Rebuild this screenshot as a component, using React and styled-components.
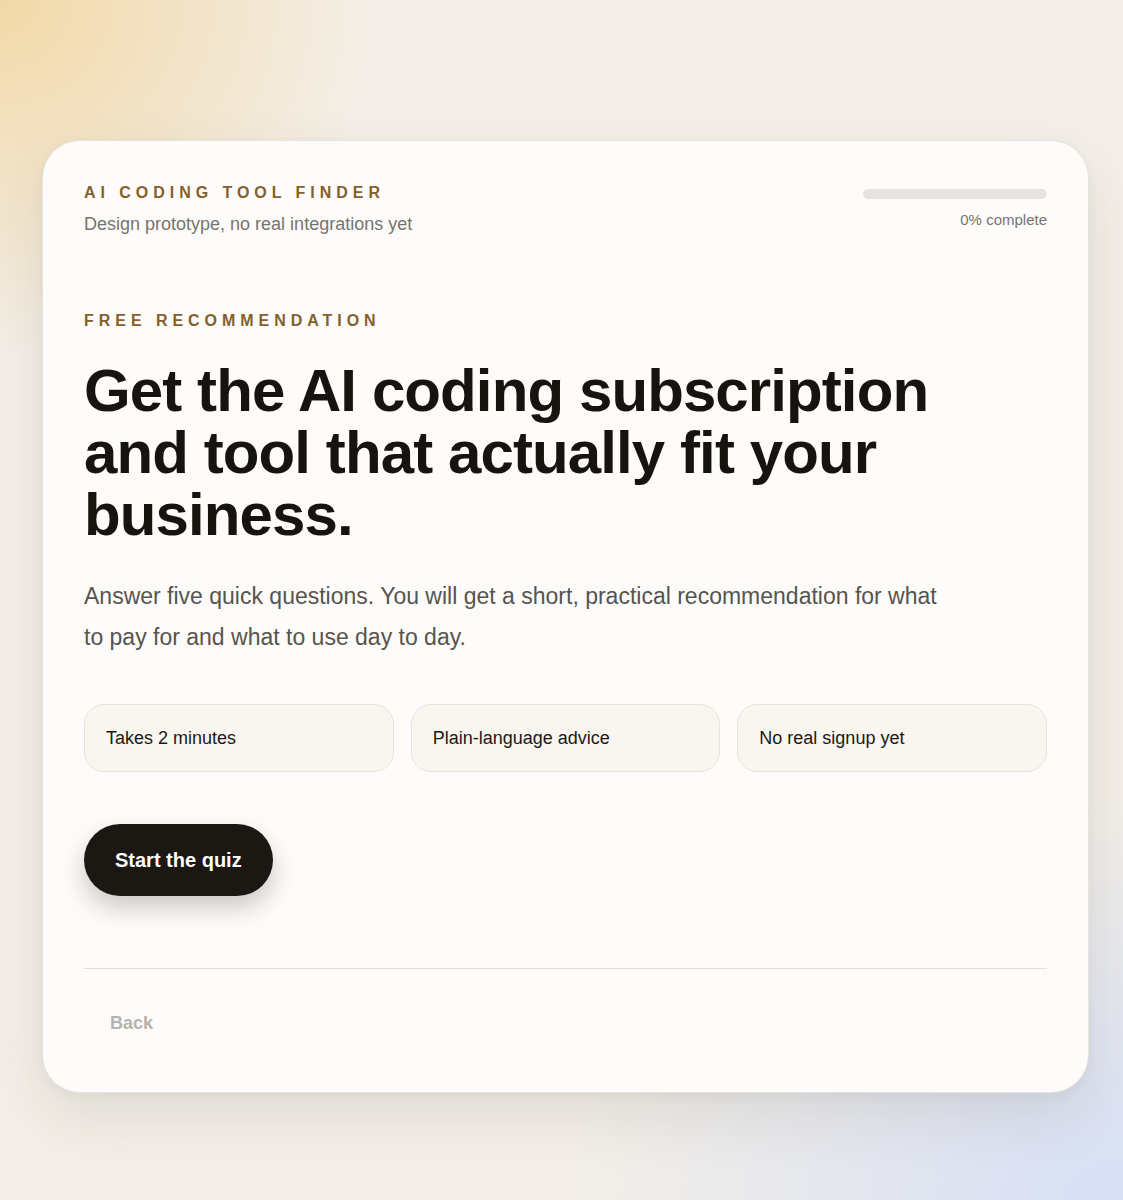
import React from "react";
import styled, { createGlobalStyle } from "styled-components";

const Global = createGlobalStyle`
  * { box-sizing: border-box; }
  html, body { margin: 0; padding: 0; }
  body {
    font-family: "Liberation Sans", Arial, sans-serif;
    background: #f3efe8;
  }
`;

const Page = styled.div`
  min-height: 1200px;
  padding: 140px 34px 108px 42px;
  background:
    radial-gradient(ellipse 560px 520px at 0% 0%, rgba(242, 214, 160, 0.9), rgba(242, 214, 160, 0) 68%),
    radial-gradient(ellipse 760px 560px at 100% 100%, rgba(212, 222, 246, 0.95), rgba(212, 222, 246, 0) 72%),
    #f3efe8;
`;

const Card = styled.main`
  background: #fdfcfa;
  border: 1px solid #e6e2dc;
  border-radius: 38px;
  padding: 42px 41px 55px 41px;
  box-shadow: 0 24px 60px rgba(60, 50, 30, 0.1), 0 4px 12px rgba(60, 50, 30, 0.04);
  display: flex;
  flex-direction: column;
`;

const Header = styled.header`
  display: flex;
  justify-content: space-between;
  align-items: flex-start;
`;

const Brand = styled.div`
  display: flex;
  flex-direction: column;
  gap: 11px;
`;

const Eyebrow = styled.div`
  color: #855f2c;
  font-size: 16px;
  font-weight: 700;
  letter-spacing: 0.31em;
  text-transform: uppercase;
  line-height: 20px;
`;

const Sub = styled.div`
  color: #777470;
  font-size: 18px;
  line-height: 21px;
`;

const Progress = styled.div`
  width: 184px;
  display: flex;
  flex-direction: column;
  align-items: flex-end;
  gap: 12px;
  padding-top: 6px;
`;

const Track = styled.div`
  width: 100%;
  height: 10px;
  border-radius: 5px;
  background: #e6e4e1;
`;

const ProgressText = styled.div`
  color: #777470;
  font-size: 15px;
  line-height: 18px;
`;

const Hero = styled.section`
  margin-top: 76px;
  display: flex;
  flex-direction: column;
`;

const Title = styled.h1`
  margin: 29px 0 0;
  font-size: 60px;
  line-height: 62px;
  font-weight: 700;
  letter-spacing: -0.9px;
  color: #17140f;
  max-width: 900px;
`;

const Lead = styled.p`
  margin: 30px 0 0;
  font-size: 23px;
  line-height: 41px;
  color: #57544f;
  max-width: 866px;
`;

const Pills = styled.div`
  margin-top: 46px;
  display: grid;
  grid-template-columns: repeat(3, 1fr);
  gap: 17px;
`;

const Pill = styled.div`
  height: 68px;
  display: flex;
  align-items: center;
  padding: 0 21px;
  background: #f9f5ef;
  border: 1px solid #e8e3dc;
  border-radius: 20px;
  font-size: 18px;
  color: #1c1915;
`;

const Primary = styled.button`
  margin-top: 52px;
  align-self: flex-start;
  height: 72px;
  padding: 0 31px;
  border: none;
  border-radius: 36px;
  background: #1b1713;
  color: #ffffff;
  font-family: inherit;
  font-size: 20px;
  font-weight: 700;
  box-shadow: 0 12px 24px rgba(30, 25, 20, 0.22);
  cursor: pointer;
`;

const Footer = styled.footer`
  margin-top: 72px;
  border-top: 1px solid #e3e0db;
  padding-top: 40px;
  display: flex;
`;

const Ghost = styled.button`
  border: none;
  background: transparent;
  padding: 0 26px;
  height: 28px;
  font-family: inherit;
  font-size: 18px;
  font-weight: 700;
  color: #b6b3ae;
`;

export default function App() {
  return (
    <>
      <Global />
      <Page>
        <Card>
          <Header>
            <Brand>
              <Eyebrow>AI Coding Tool Finder</Eyebrow>
              <Sub>Design prototype, no real integrations yet</Sub>
            </Brand>
            <Progress>
              <Track />
              <ProgressText>0% complete</ProgressText>
            </Progress>
          </Header>
          <Hero>
            <Eyebrow>Free Recommendation</Eyebrow>
            <Title>Get the AI coding subscription and tool that actually fit your business.</Title>
            <Lead>
              Answer five quick questions. You will get a short, practical recommendation for what to pay for and what to use day to day.
            </Lead>
            <Pills>
              <Pill>Takes 2 minutes</Pill>
              <Pill>Plain-language advice</Pill>
              <Pill>No real signup yet</Pill>
            </Pills>
            <Primary>Start the quiz</Primary>
          </Hero>
          <Footer>
            <Ghost>Back</Ghost>
          </Footer>
        </Card>
      </Page>
    </>
  );
}
